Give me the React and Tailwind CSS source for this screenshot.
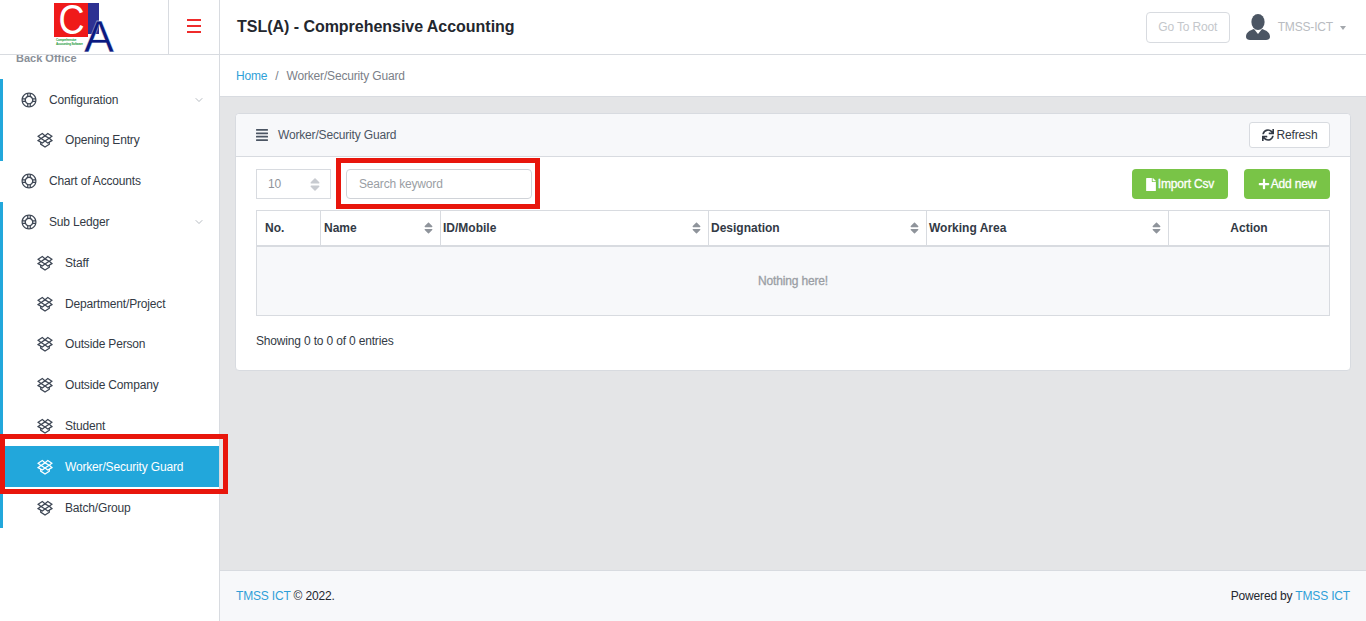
import React from "react";
import { LiaDropbox, LiaLifeRing } from "react-icons/lia";
import { FaAlignJustify, FaSort, FaFile, FaPlus, FaSync } from "react-icons/fa";
import { LuChevronDown } from "react-icons/lu";

const Logo = () => (
  <svg width="62" height="52" viewBox="0 0 62 52" className="block overflow-visible">
    <rect x="0" y="0" width="34" height="34" fill="#ef1a1a" />
    <rect x="34" y="0" width="11" height="31" fill="#2e3192" />
    <text transform="translate(4.5,31) scale(0.86,1)" fontFamily="Liberation Sans" fontSize="42" fill="#fff">C</text>
    <text x="30" y="49" fontFamily="Liberation Sans" fontSize="45" fill="#0b1a80" stroke="#fff" strokeWidth="0.3">A</text>
    <text x="2" y="38" fontFamily="Liberation Sans" fontSize="3" fontWeight="700" fill="#1a9a3a">Comprehensive</text>
    <text x="2" y="42" fontFamily="Liberation Sans" fontSize="3" fontWeight="700" fill="#1a9a3a">Accounting Software</text>
  </svg>
);

const Avatar = () => (
  <svg width="24" height="26" viewBox="0 0 24 26" className="block">
    <ellipse cx="12" cy="8" rx="6.6" ry="8" fill="#4b5563" />
    <path d="M8 15 L12 20 L16 15 C20 16.5 24 18 24 23 C24 25 22 26 20 26 L4 26 C2 26 0 25 0 23 C0 18 4 16.5 8 15 Z" fill="#4b5563" />
  </svg>
);

const Top = ({ label, chevron }) => (
  <div className="h-[40.8px] flex items-center pl-[19px] pr-[14px] text-[#333a45]">
    <LiaLifeRing className="w-[20px] h-[20px] text-[#3d4654] shrink-0" />
    <span className="ml-[10px] flex-1">{label}</span>
    {chevron && <LuChevronDown className="w-[12px] h-[12px] text-[#8a929c]" strokeWidth={1.25} />}
  </div>
);

const Sub = ({ label, active }) => (
  <div className={`h-[40.8px] flex items-center ${active ? "bg-[#22a7db] text-white ml-[2px] pl-[30px]" : "pl-[35px] text-[#333a45]"}`}>
    <LiaDropbox className={`w-[20px] h-[20px] shrink-0 ${active ? "text-white" : "text-[#3d4654]"}`} />
    <span className="ml-[10px]">{label}</span>
  </div>
);

const Th = ({ children, sort, className = "" }) => (
  <th className={`border-r border-[#d8dbe0] pr-[2px] font-bold text-left tracking-normal ${className}`}>
    <div className="flex items-center justify-between">
      <span>{children}</span>
      {sort && <FaSort className="w-[9px] h-[14px] text-[#8f949b] mr-[5px]" />}
    </div>
  </th>
);

export default function App() {
  return (
    <div className="relative h-[621px] w-full overflow-hidden bg-[#e4e5e7] text-[12px] tracking-[-0.17px] text-[#333a45] font-['Liberation_Sans',Arial,sans-serif] flex flex-col">
      <header className="h-[55px] shrink-0 flex bg-white border-b border-[#d8dbe0]">
        <div className="w-[169px] shrink-0 border-r border-[#d8dbe0] pl-[54px] pt-[3px]">
          <Logo />
        </div>
        <div className="w-[51px] shrink-0 border-r border-[#d8dbe0] flex flex-col justify-center items-center gap-[4.5px] pb-[2px]">
          <span className="block w-[14px] h-[1.5px] bg-[#ef2b2b]" />
          <span className="block w-[14px] h-[1.5px] bg-[#ef2b2b]" />
          <span className="block w-[14px] h-[1.5px] bg-[#ef2b2b]" />
        </div>
        <div className="flex-1 flex items-center pl-[17px] pr-[20px]">
          <h1 className="text-[16px] font-bold tracking-[-0.03px] text-[#23272e] flex-1">TSL(A) - Comprehensive Accounting</h1>
          <button className="w-[84px] h-[31px] -mr-[1px] border border-[#d8dbe0] rounded-[4px] text-[#c4c7cb] bg-white">Go To Root</button>
          <div className="ml-[17px] flex items-center">
            <Avatar />
            <span className="ml-[8px] text-[#b9bcc1]">TMSS-ICT</span>
            <span className="ml-[7px] mt-[1px] w-0 h-0 border-x-[3.5px] border-x-transparent border-t-[4px] border-t-[#a4a8ad]" />
          </div>
        </div>
      </header>

      <div className="flex-1 flex min-h-0">
        <aside className="w-[220px] shrink-0 bg-white border-r border-[#d8dbe0] overflow-hidden">
          <div className="h-[7px] leading-none -mt-[2px] pl-[16px] font-bold tracking-normal text-[11px] text-[#8a9098]">Back Office</div>
          <div className="mt-[19.3px] border-l-[3px] border-[#22a7db] [&>div]:-ml-[3px]">
            <Top label="Configuration" chevron />
            <Sub label="Opening Entry" />
          </div>
          <Top label="Chart of Accounts" />
          <div className="border-l-[3px] border-[#22a7db] [&>div]:-ml-[3px]">
            <Top label="Sub Ledger" chevron />
            <Sub label="Staff" />
            <Sub label="Department/Project" />
            <Sub label="Outside Person" />
            <Sub label="Outside Company" />
            <Sub label="Student" />
            <div className="!ml-0"><Sub label="Worker/Security Guard" active /></div>
            <Sub label="Batch/Group" />
          </div>
        </aside>

        <main className="flex-1 flex flex-col min-w-0">
          <div className="h-[42px] shrink-0 bg-white border-b border-[#d8dbe0] flex items-center pl-[16px] text-[#7b8088]">
            <span className="text-[#2f9fd8]">Home</span>
            <span className="mx-[8px]">/</span>
            <span>Worker/Security Guard</span>
          </div>
          <div className="flex-1 px-[15px] pt-[16px] min-h-0">
            <section className="h-[258px] bg-white border border-[#d8dbe0] rounded-[4px]">
              <div className="h-[43px] bg-[#f7f8fa] border-b border-[#d8dbe0] rounded-t-[4px] flex items-center pl-[20px] pr-[20px]">
                <FaAlignJustify className="w-[12px] h-[14px] text-[#4b5563]" />
                <span className="ml-[10px] text-[#4b5563] flex-1">Worker/Security Guard</span>
                <button className="w-[81px] h-[26px] bg-white border border-[#d8dbe0] rounded-[3px] flex items-center justify-center gap-[3px] text-[#333a45]">
                  <FaSync className="w-[12px] h-[12px]" />Refresh
                </button>
              </div>
              <div className="px-[20px] pt-[12px]">
                <div className="flex items-center h-[30px]">
                  <div className="w-[75px] h-[30px] border border-[#d8dbe0] flex items-center justify-between pl-[11px] pr-[10px] text-[#8f949b]">
                    <span>10</span>
                    <FaSort className="w-[10px] h-[17px] text-[#c8cbd0]" />
                  </div>
                  <input readOnly placeholder="Search keyword" className="ml-[15px] w-[186px] h-[30px] border border-[#d0d3d8] rounded-[4px] px-[12px] outline-none placeholder:text-[#9a9ea4]" />
                  <div className="flex-1" />
                  <button className="w-[96px] h-[30px] bg-[#79c447] rounded-[4px] text-white [-webkit-text-stroke:0.3px_white] flex items-center justify-center gap-[2px]">
                    <FaFile className="w-[10px] h-[13px]" />Import Csv
                  </button>
                  <button className="ml-[16px] w-[86px] h-[30px] bg-[#79c447] rounded-[4px] text-white [-webkit-text-stroke:0.3px_white] flex items-center justify-center gap-[1px]">
                    <FaPlus className="w-[12px] h-[12px]" />Add new
                  </button>
                </div>
                <table className="mt-[11px] w-[1074px] table-fixed border-collapse border border-[#d8dbe0]">
                  <thead>
                    <tr className="h-[35px] border-b-2 border-[#d8dbe0]">
                      <th className="w-[64px] border-r border-[#d8dbe0] font-bold text-left pl-[8px] tracking-normal">No.</th>
                      <Th sort className="w-[120px] pl-[3px]">Name</Th>
                      <Th sort className="w-[268px] pl-[2px]">ID/Mobile</Th>
                      <Th sort className="w-[218px] pl-[2px]">Designation</Th>
                      <Th sort className="w-[242px] pl-[2px]">Working Area</Th>
                      <th className="font-bold text-center tracking-normal">Action</th>
                    </tr>
                  </thead>
                  <tbody>
                    <tr className="h-[70px] bg-[#f7f8fa]">
                      <td colSpan={6} className="text-center text-[#9a9ea4] [-webkit-text-stroke:0.3px_#9a9ea4]">Nothing here!</td>
                    </tr>
                  </tbody>
                </table>
                <div className="mt-[16px]">Showing 0 to 0 of 0 entries</div>
              </div>
            </section>
          </div>
          <footer className="h-[51px] pb-[1px] shrink-0 bg-[#f7f8fa] border-t border-[#d8dbe0] flex items-center justify-between px-[16px] text-[#23272e]">
            <span><span className="text-[#2f9fd8]">TMSS ICT</span> © 2022.</span>
            <span>Powered by <span className="text-[#2f9fd8]">TMSS ICT</span></span>
          </footer>
        </main>
      </div>

      <div className="absolute left-0 top-[434px] w-[228px] h-[60px] border-[5px] border-[#e8160c] pointer-events-none" />
      <div className="absolute left-[336px] top-[158px] w-[204px] h-[51px] border-[5px] border-[#e8160c] pointer-events-none" />
    </div>
  );
}
